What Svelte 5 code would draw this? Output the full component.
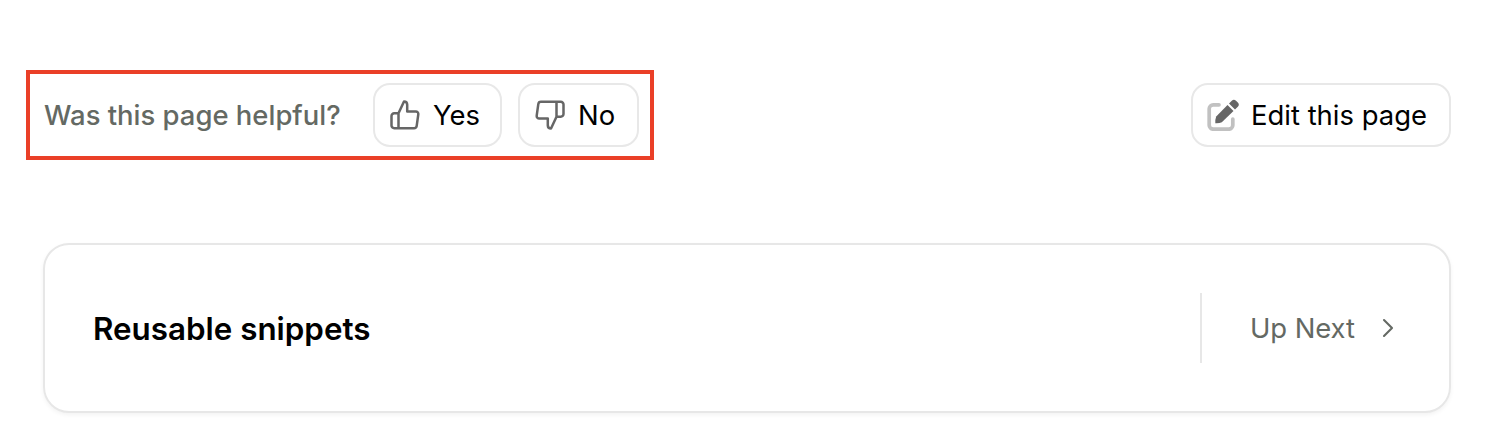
<script>
  const votes = [
    { label: 'Yes', down: false },
    { label: 'No', down: true }
  ];
</script>

<main>
  <div class="toolbar">
    <div class="feedback">
      <span class="question">Was this page helpful?</span>
      {#each votes as vote}
        <button class="button" class:no={vote.down}>
          <svg class:down={vote.down} width="30" height="30" viewBox="0 0 30 30" fill="none" stroke="#666" stroke-width="2.5" stroke-linejoin="round" stroke-linecap="round">
            <path d="M8.5 13.3H4.2a2.7 2.7 0 0 0-2.7 2.7v9.5a2.7 2.7 0 0 0 2.7 2.7H24a2.7 2.7 0 0 0 2.7-2.3l1.6-11.5a2.6 2.6 0 0 0-2.6-3H17.2V4.6A3.2 3.2 0 0 0 14 1.5L8.5 13.3V28.2" />
          </svg>
          <span>{vote.label}</span>
        </button>
      {/each}
    </div>

    <button class="button edit">
      <svg width="32" height="32" viewBox="0 0 32 32" fill="none">
        <path d="M12 5.8H6.2a4 4 0 0 0-4 4v16.4a4 4 0 0 0 4 4h15.6a4 4 0 0 0 4-4V20" stroke="#c1c1c1" stroke-width="3.7" stroke-linecap="round" />
        <path d="M20.5 6.1 26.5 12 14.8 23.3Q12.5 24.4 8.3 24.2Q8.1 20 9.2 17.4Z" fill="#666" />
        <path d="m22 4.5 2.8-2.7a3 3 0 0 1 4.2 0l1.8 1.8a3 3 0 0 1 0 4.2L28 10.5Z" fill="#666" />
      </svg>
      <span>Edit this page</span>
    </button>
  </div>

  <section class="next-card">
    <h2>Reusable snippets</h2>
    <div class="next">
      <span>Up Next</span>
      <svg width="12" height="20" viewBox="0 0 12 20" fill="none" stroke="#646963" stroke-width="2.1" stroke-linecap="round" stroke-linejoin="round">
        <path d="m2 2 8 8-8 8" />
      </svg>
    </div>
  </section>
</main>

<style>
  :global(body) {
    margin: 0;
    background: #fff;
  }

  main {
    box-sizing: border-box;
    width: 1506px;
    height: 436px;
    padding: 70px 55px 0 26px;
    overflow: hidden;
    font-family: Inter, sans-serif;
    font-size: 27.45px;
    line-height: 40px;
    color: #000;
  }

  .toolbar {
    display: flex;
    align-items: center;
    justify-content: space-between;
  }

  .feedback {
    box-sizing: border-box;
    display: flex;
    align-items: center;
    width: 628px;
    height: 90px;
    padding-left: 14px;
    border: 4px solid #ea3f27;
  }

  .question {
    width: 329px;
    color: #646963;
    font-weight: 500;
    white-space: nowrap;
  }

  .button {
    box-sizing: border-box;
    display: flex;
    align-items: center;
    width: 129px;
    height: 64px;
    padding: 0 0 0 15px;
    gap: 13px;
    border: 2px solid #e8e8e8;
    border-radius: 17px;
    background: #fff;
    color: #000;
    font: inherit;
    white-space: nowrap;
  }

  .button svg {
    flex: none;
  }

  .no {
    width: 121px;
    margin-left: 16px;
  }

  .down {
    transform: rotate(180deg);
  }

  .edit {
    width: 260px;
    padding-left: 14px;
    gap: 12px;
  }

  .next-card {
    box-sizing: border-box;
    display: flex;
    align-items: center;
    justify-content: space-between;
    width: 1408px;
    height: 170px;
    margin: 83px 0 0 17px;
    padding: 0 55px 0 48px;
    border: 2px solid #e7e7e7;
    border-radius: 26px;
    box-shadow: 0 2px 4px rgba(0, 0, 0, 0.05);
  }

  h2 {
    margin: 0;
    padding-top: 2px;
    font-size: 31.35px;
    font-weight: 600;
  }

  .next {
    box-sizing: border-box;
    display: flex;
    align-items: center;
    justify-content: space-between;
    width: 194px;
    height: 70px;
    padding-left: 48px;
    border-left: 2px solid #e7e7e7;
    color: #646963;
    letter-spacing: -0.1px;
  }
</style>
